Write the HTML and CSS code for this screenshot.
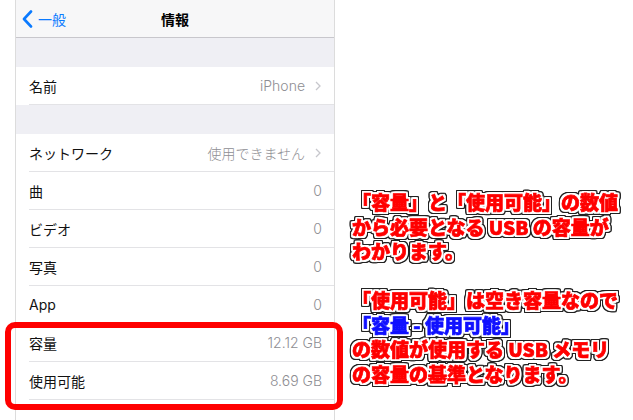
FILE: index.html
```html
<!DOCTYPE html>
<html lang="ja">

<head>
  <meta charset="UTF-8">
  <meta name="viewport" content="width=device-width, initial-scale=1.0">
  <title>情報</title>
  <link rel="stylesheet" href="styles.css">
</head>

<body>
  <div class="page">
    <div class="phone">
      <div class="nav">
        <a class="back" href="#">
          <svg width="11" height="18" viewBox="0 0 11 18"><polyline points="9,1.5 2,9 9,16.5" fill="none" stroke="#0a7aff" stroke-width="2.6" stroke-linecap="round" stroke-linejoin="round"/></svg>
          <span>一般</span>
        </a>
        <p class="title">情報</p>
      </div>

      <div class="gap"></div>

      <div class="group">
        <div class="row">
          <span class="label">名前</span>
          <span class="value">iPhone<svg class="chev" width="6" height="10" viewBox="0 0 6 10"><polyline points="1,1 5,5 1,9" fill="none" stroke="#c7c7cc" stroke-width="1.3"/></svg></span>
        </div>
      </div>

      <div class="gap"></div>

      <div class="group">
        <div class="row">
          <span class="label">ネットワーク</span>
          <span class="value">使用できません<svg class="chev" width="6" height="10" viewBox="0 0 6 10"><polyline points="1,1 5,5 1,9" fill="none" stroke="#c7c7cc" stroke-width="1.3"/></svg></span>
        </div>
        <div class="row">
          <span class="label">曲</span>
          <span class="value">0</span>
        </div>
        <div class="row">
          <span class="label">ビデオ</span>
          <span class="value">0</span>
        </div>
        <div class="row">
          <span class="label">写真</span>
          <span class="value">0</span>
        </div>
        <div class="row">
          <span class="label">App</span>
          <span class="value">0</span>
        </div>
        <div class="row">
          <span class="label">容量</span>
          <span class="value">12.12 GB</span>
        </div>
        <div class="row">
          <span class="label">使用可能</span>
          <span class="value">8.69 GB</span>
        </div>
      </div>
    </div>

    <div class="note">
      <p>「容量」と「使用可能」の数値<br>から必要となる USB の容量が<br>わかります。</p>
      <p><br>「使用可能」は空き容量なので<br><span class="blue">「容量 - 使用可能」</span><br>の数値が使用する USB メモリ<br>の容量の基準となります。</p>
    </div>

    <div class="mark"></div>
  </div>
</body>

</html>
```

FILE: styles.css
```css
/* document */
* {
  box-sizing: border-box;
}

body {
  margin: 0;
  background: #fff;
  font-family: Inter, "Noto Sans CJK JP", sans-serif;
  overflow: hidden;
}

.page {
  position: relative;
  display: flex;
  height: 420px;
}

/* phone screen */
.phone {
  width: 320px;
  margin-left: 15px;
  border-left: 1px solid #dcdcdc;
  border-right: 1px solid #dcdcdc;
  background: #fff;
  flex-shrink: 0;
}

.nav {
  position: relative;
  height: 38px;
  background: #f7f7f8;
  border-bottom: 1px solid #c8c7cc;
  display: flex;
  align-items: center;
  justify-content: center;
}

.nav .back {
  position: absolute;
  left: 6px;
  top: 9px;
  display: flex;
  align-items: center;
  gap: 5px;
  color: #0a7aff;
  text-decoration: none;
  font-size: 14px;
}

.nav .title {
  margin: 0;
  font-size: 14px;
  font-weight: 700;
  color: #000;
}

.gap {
  height: 29px;
  background: #efeff4;
}

.group {
  background: #fff;
}

.row {
  height: 38px;
  margin-left: 13px;
  padding-right: 12px;
  border-bottom: 1px solid #e3e3e6;
  display: flex;
  align-items: center;
  justify-content: space-between;
  font-size: 14px;
}

.row .label {
  color: #111;
  font-weight: 400;
}

.row .value {
  display: flex;
  align-items: center;
  gap: 10px;
  color: #8e8e93;
  font-weight: 300;
}

.row .chev {
  margin-right: 1px;
}

/* annotation */
.note {
  margin-left: 17px;
  padding-top: 190px;
  font-family: "Noto Sans CJK JP", sans-serif;
  font-weight: 900;
  font-size: 19px;
  line-height: 24.5px;
  color: #ff0000;
  white-space: nowrap;
  -webkit-text-stroke: 0.7px #ff0000;
  text-shadow:
    2px 0 0 #fff, -2px 0 0 #fff, 0 2px 0 #fff, 0 -2px 0 #fff,
    2px 2px 0 #fff, -2px 2px 0 #fff, 2px -2px 0 #fff, -2px -2px 0 #fff,
    1px 2px 0 #fff, -1px 2px 0 #fff, 1px -2px 0 #fff, -1px -2px 0 #fff,
    2px 1px 0 #fff, -2px 1px 0 #fff, 2px -1px 0 #fff, -2px -1px 0 #fff;
  filter: drop-shadow(1px 0 0 #222) drop-shadow(-1px 0 0 #222) drop-shadow(0 1px 0 #222) drop-shadow(0 -1px 0 #222);
}

.note p {
  margin: 0;
}

.note .blue {
  color: #1010ff;
  -webkit-text-stroke-color: #1010ff;
}

.mark {
  position: absolute;
  left: 5px;
  top: 322px;
  width: 338px;
  height: 88px;
  border: 6px solid #ff0000;
  border-radius: 10px;
}
```
